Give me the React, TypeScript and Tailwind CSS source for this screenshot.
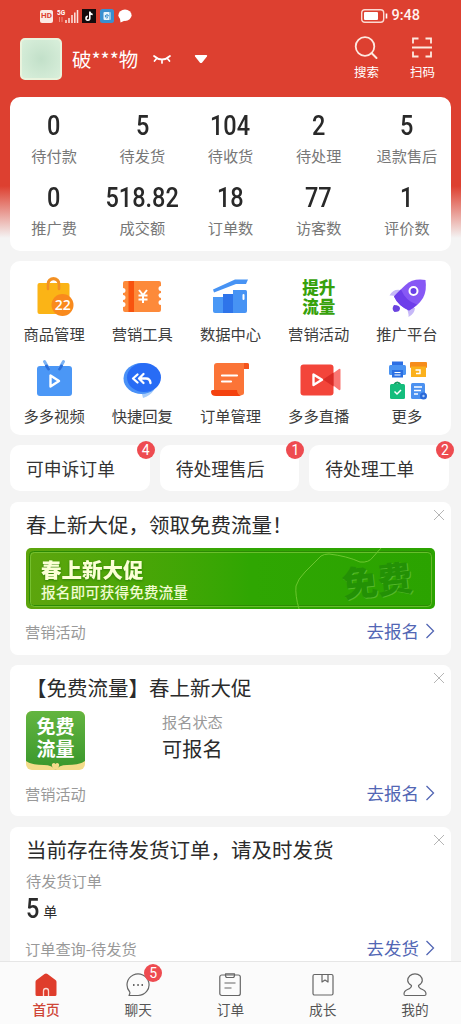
import React from "react";
import clsx from "clsx";

const stats = [
  { value: "0", label: "待付款" },
  { value: "5", label: "待发货" },
  { value: "104", label: "待收货" },
  { value: "2", label: "待处理" },
  { value: "5", label: "退款售后" },
  { value: "0", label: "推广费" },
  { value: "518.82", label: "成交额" },
  { value: "18", label: "订单数" },
  { value: "77", label: "访客数" },
  { value: "1", label: "评价数" },
];

const BagIcon = () => (
  <svg width="44" height="44" viewBox="0 0 44 44">
    <path d="M16 11V9a5.5 5.5 0 0 1 11 0v2" fill="none" stroke="#f59a2c" strokeWidth="3" />
    <rect x="5.5" y="8" width="32" height="31" rx="2" fill="#fbb416" />
    <path d="M16 14V9.500a5.500 5.500 0 0 1 11 0V14" fill="none" stroke="#f28f25" strokeWidth="2.600" strokeLinecap="round" />
    <circle cx="30.500" cy="30" r="11" fill="#f98a1d" />
    <text x="30.800" y="35" textAnchor="middle" fontFamily="Open Sans" fontSize="14" fontWeight="600" fill="#fff">
      22
    </text>
  </svg>
);

const CouponIcon = () => (
  <svg width="44" height="44" viewBox="0 0 44 44">
    <path
      d="M5 6h34q2 0 2 2v3a2.500 2.500 0 0 0 0 5v2a2.500 2.500 0 0 0 0 5v2a2.500 2.500 0 0 0 0 5v5q0 2-2 2H5q-2 0-2-2v-3a2.500 2.500 0 0 0 0-5v-2a2.500 2.500 0 0 0 0-5v-2a2.500 2.500 0 0 0 0-5V8q0-2 2-2z"
      fill="#fd8a3a"
    />
    <path d="M8.500 6h5.500v31H8.500z" fill="#f8530f" />
    <path d="M19 15l4 5 4-5M23 20v8M18.500 20.500h9M18.500 24.500h9" fill="none" stroke="#fff" strokeWidth="2" />
  </svg>
);

const ChartIcon = () => (
  <svg width="44" height="44" viewBox="0 0 44 44">
    <path d="M5 14.500L27 4.500h13l-2 4.500H28L6 17.500z" fill="#4793f4" />
    <path d="M5 22h11v16H7q-2 0-2-2z" fill="#4a98f6" />
    <path d="M15 19h11v19H15z" fill="#2e74ea" />
    <path d="M25 15h12.500q1.500 0 1.500 1.500V36q0 2-2 2H25z" fill="#4793f4" />
    <rect x="34.500" y="19" width="2" height="6" rx="1" fill="#fff" />
  </svg>
);

const RocketIcon = () => (
  <svg width="44" height="44" viewBox="0 0 44 44">
    <path d="M15 15Q8 14 4.500 20.500q5-.500 10 2zM30 33q-.500 6-6.500 9 .500-5-3-10z" fill="#c7b9f8" />
    <path d="M40.500 5Q28 3 20.500 10 13 17 9 21.500q4 9 15 14Q33 31 38 23q4-7 2.500-18z" fill="#8758f5" />
    <path d="M16 14.500Q12 18 9 21.500q4 9 15 14 5-3 8-6-11-3-16-15z" fill="#6e3eea" />
    <circle cx="28.500" cy="16" r="4" fill="#6941e6" stroke="#fff" strokeWidth="2" />
    <path d="M9 30q6 0 6 3.500T9.500 37Q6 34 9 30z" fill="#6a43df" />
  </svg>
);

const VideoIcon = () => (
  <svg width="44" height="44" viewBox="0 0 44 44">
    <rect x="5" y="9" width="35" height="30" rx="3" fill="#4b97f6" />
    <path d="M12.500 4.500l4 7M31.500 4.500l-4 7" stroke="#7bb2f4" strokeWidth="3" strokeLinecap="round" />
    <path d="M14.500 9l2 3M29.500 9l-2 3" stroke="#2b6fdb" strokeWidth="3" strokeLinecap="round" />
    <path d="M18.500 18.500v11l8.500-5.500z" fill="none" stroke="#fff" strokeWidth="2.400" strokeLinejoin="round" />
  </svg>
);

const ReplyIcon = () => (
  <svg width="44" height="44" viewBox="0 0 44 44">
    <path d="M21 33h13q-4 6-11 8z" fill="#a9cdf9" />
    <ellipse cx="21.500" cy="21.500" rx="18" ry="15.500" fill="#4a91f7" />
    <ellipse cx="24" cy="20.500" rx="17" ry="14.500" fill="#286cf5" />
    <path
      d="M17.500 17.500l-4.500 4 4.500 4M23.500 17l-4.500 4.500 4.500 4.500M19.500 21.500H26q4 0 4.500 4.500"
      fill="none"
      stroke="#fff"
      strokeWidth="2.300"
      strokeLinecap="round"
      strokeLinejoin="round"
    />
  </svg>
);

const OrderIcon = () => (
  <svg width="44" height="44" viewBox="0 0 44 44">
    <path d="M9 6h30q2 0 2 2v4h-5v24q0 2-2 2H6V9q0-3 3-3z" fill="#fb7437" />
    <path d="M36 6h3q2 0 2 2v4h-5z" fill="#f4541c" />
    <path d="M4.500 33H29q0 5 5 6H8q-5 0-5-4.500 0-1.500 1.500-1.500z" fill="#f4420f" />
    <path d="M14 18.500h15M14 24.500h9" stroke="#fff" strokeWidth="2.200" strokeLinecap="round" />
  </svg>
);

const LiveIcon = () => (
  <svg width="44" height="44" viewBox="0 0 44 44">
    <path d="M28 22l14-10q1.500-.6 1.500 1v19q0 1.600-1.500 1z" fill="#fa7672" />
    <rect x="3.500" y="7.500" width="33" height="31" rx="3" fill="#f3453a" />
    <path d="M26 22.500l10.500-7v14z" fill="#d92c26" />
    <path d="M16.500 17.500v10.500l8.500-5.200z" fill="none" stroke="#fff" strokeWidth="2.400" strokeLinejoin="round" />
  </svg>
);

const MoreIcon = () => (
  <svg width="44" height="44" viewBox="0 0 44 44">
    <path d="M7 4.500h11V9H7z" fill="#2d6fe4" />
    <rect x="4" y="8" width="17" height="10" rx="1.500" fill="#4a93f2" />
    <path d="M7 13h11v7.500H7z" fill="#2b6fe3" />
    <path d="M9.500 15.500h6M9.500 18h6" stroke="#fff" strokeWidth="1.200" />
    <rect x="25" y="5" width="17" height="6" rx="1" fill="#f68c1c" />
    <path d="M26 9.500h15V20H26z" fill="#fbb11d" />
    <path d="M30.500 13h4.500v3.500h-4" fill="none" stroke="#fff" strokeWidth="1.500" />
    <path d="M9 28q3-5 7 0" fill="none" stroke="#159a61" strokeWidth="2" />
    <rect x="5" y="27" width="15" height="15" rx="1.500" fill="#14bd7c" />
    <path d="M9.500 34.500l2.500 2.500 4-4" fill="none" stroke="#fff" strokeWidth="1.500" />
    <rect x="26" y="26" width="14" height="16" rx="1.500" fill="#4b91f0" />
    <path d="M29 30h8M29 33.500h7M29 37h4" stroke="#fff" strokeWidth="1.300" />
    <circle cx="38.500" cy="39" r="3.500" fill="#2969d9" />
    <circle cx="38.500" cy="39" r="1.200" fill="#a9cbf8" />
  </svg>
);

const BoostIcon = () => (
  <div className="flex h-11 flex-col justify-center text-center text-[16.500px] font-black leading-[19px] text-[#37a10b]">
    <span>提升</span>
    <span>流量</span>
  </div>
);

const tools = [
  { icon: <BagIcon />, label: "商品管理" },
  { icon: <CouponIcon />, label: "营销工具" },
  { icon: <ChartIcon />, label: "数据中心" },
  { icon: <BoostIcon />, label: "营销活动" },
  { icon: <RocketIcon />, label: "推广平台" },
  { icon: <VideoIcon />, label: "多多视频" },
  { icon: <ReplyIcon />, label: "快捷回复" },
  { icon: <OrderIcon />, label: "订单管理" },
  { icon: <LiveIcon />, label: "多多直播" },
  { icon: <MoreIcon />, label: "更多" },
];

const todos = [
  { label: "可申诉订单", count: 4 },
  { label: "待处理售后", count: 1 },
  { label: "待处理工单", count: 2 },
];

const Badge = ({ count, className }: { count: number; className: string }) => (
  <span
    className={clsx(
      "absolute flex h-[18px] w-[18px] items-center justify-center rounded-full bg-[#ee4b50] font-[Roboto] text-[14px] leading-none text-white",
      className
    )}
  >
    {count}
  </span>
);

const StatusBar = () => (
  <div className="flex h-8 shrink-0 items-center justify-between pl-10 pr-[41px]">
    <div className="flex items-center">
      <span className="flex h-[13px] w-[13px] items-center justify-center rounded-[2px] bg-[#fbe9e4] font-[Roboto] text-[8px] font-bold text-[#dd4030]">
        HD
      </span>
      <svg className="ml-1" width="22" height="16" viewBox="0 0 22 16">
        <text x="0" y="6.500" fontFamily="Roboto" fontSize="6.500" fontWeight="700" fill="#fff">
          5G
        </text>
        <path d="M2.500 9v5M5 9v5" stroke="#f08a7c" strokeWidth="1" />
        <path d="M9 12v3M12 10v5M15 7v8M17.800 4.500V15M20.500 2v13" stroke="#fbe3de" strokeWidth="1.500" />
      </svg>
      <svg className="ml-[3px]" width="14" height="14" viewBox="0 0 14 14">
        <rect width="14" height="14" fill="#150b0d" />
        <path d="M7.800 2.500v6.800a1.900 1.900 0 1 1-1.900-1.900M7.800 3q.5 2.300 2.900 2.500" fill="none" stroke="#fff" strokeWidth="1.600" />
      </svg>
      <svg className="ml-1" width="14" height="14" viewBox="0 0 14 14">
        <rect width="14" height="14" rx="2.500" fill="#398fd0" />
        <rect x="3.500" y="3" width="7.500" height="8" rx="1" fill="#e7f3fb" />
        <path d="M5 7h3.500a1.600 1.600 0 1 0-.5 1.500M10 3v8" fill="none" stroke="#398fd0" strokeWidth="1" />
      </svg>
      <svg className="ml-1" width="14" height="14" viewBox="0 0 14 14">
        <ellipse cx="7" cy="6.300" rx="6.600" ry="5.700" fill="#fff" />
        <path d="M2 9.500L2.500 13.500 7 11.500z" fill="#fff" />
      </svg>
    </div>
    <div className="flex items-center">
      <svg width="27" height="14" viewBox="0 0 27 14">
        <rect x=".7" y=".7" width="22" height="12.600" rx="3" fill="none" stroke="#fbd9d2" strokeWidth="1.400" />
        <rect x="3" y="3" width="14" height="8" rx="1" fill="#fff" />
        <path d="M25.500 4.500v5" stroke="#fff" strokeWidth="1.600" />
      </svg>
      <span className="ml-[3px] font-[Roboto] text-[14.500px] font-medium leading-none text-[#fff3ef]">9:48</span>
    </div>
  </div>
);

const Header = () => (
  <div className="flex h-[65px] shrink-0 items-start text-white">
    <div className="ml-5 mt-[6px] h-[42px] w-[42px] rounded-[5px] border-2 border-[#e9f3dd] bg-[radial-gradient(#c2e0c9,#d9efdb)]" />
    <span className="ml-[10px] mt-[15px] text-[19.500px] leading-6">破***物</span>
    <svg className="ml-[15px] mt-[21px]" width="18" height="12" viewBox="0 0 18 12">
      <path d="M1 3q8 7 16 0M4 5L1.500 8M9 6.500V10M14 5l2.500 3" fill="none" stroke="#fff" strokeWidth="1.700" strokeLinecap="round" />
    </svg>
    <svg className="ml-[23px] mt-[22px]" width="14" height="10" viewBox="0 0 14 10">
      <path d="M1.500 1h11q1.200.3.400 1.500L8.200 8.500q-1.200 1-2.400 0L1.100 2.500Q.3 1.300 1.500 1z" fill="#fff" />
    </svg>
    <div className="ml-auto mr-[26px] flex gap-[31px] text-[12.500px] leading-4">
      <div className="flex flex-col items-center">
        <svg className="mt-1" width="24" height="24" viewBox="0 0 24 24">
          <circle cx="11" cy="10.500" r="9.300" fill="none" stroke="#fde9e0" strokeWidth="1.800" />
          <path d="M17.500 17l5 5" stroke="#fde9e0" strokeWidth="2" strokeLinecap="round" />
        </svg>
        <span className="mt-1">搜索</span>
      </div>
      <div className="flex flex-col items-center">
        <svg className="mt-1" width="24" height="24" viewBox="0 0 24 24">
          <path
            d="M3 7.500V2.500h5.500M15.500 2.500H21v5M3 15.500v5h5.500M15.500 20.500H21v-5M2 11.500h20"
            fill="none"
            stroke="#fde9e0"
            strokeWidth="1.800"
          />
        </svg>
        <span className="mt-1">扫码</span>
      </div>
    </div>
  </div>
);

const Card = ({
  title,
  action,
  source,
  children,
  className,
}: {
  title: string;
  action: string;
  source: string;
  children: React.ReactNode;
  className: string;
}) => (
  <div className={clsx("relative mx-[10px] flex shrink-0 flex-col rounded-lg bg-white px-4 pt-[7px]", className)}>
    <svg className="absolute right-[6px] top-[7px]" width="12" height="12" viewBox="0 0 12 12">
      <path d="M1 1l10 10M11 1L1 11" stroke="#b5b5b5" strokeWidth="1" />
    </svg>
    <h2 className="h-[30px] whitespace-nowrap text-[20.500px] leading-[30px] text-[#2b2b2b]">{title}</h2>
    {children}
    <div className="-ml-px flex h-6 items-center justify-between">
      <span className="text-[15.200px] text-[#999]">{source}</span>
      <span className="flex items-center text-[17.500px] text-[#5266b4]">
        {action}
        <svg className="ml-[6px]" width="10" height="16" viewBox="0 0 10 16">
          <path d="M1.500 1l7 7-7 7" fill="none" stroke="#5266b4" strokeWidth="1.300" />
        </svg>
      </span>
    </div>
  </div>
);

const Banner = () => (
  <div className="relative mt-[9px] flex h-[61px] shrink-0 flex-col overflow-hidden rounded-[5px] bg-linear-to-r from-[#5da50d] via-[#2fa602] via-55% to-[#2ba300] pl-[15px] pt-[10px]">
    <svg className="absolute inset-0" width="410" height="61" viewBox="0 0 410 61">
      <rect x="3.500" y="3.500" width="402" height="54" rx="4" fill="none" stroke="#2c8a04" strokeWidth="1" />
      <rect x="4.500" y="4.500" width="401" height="54" rx="4" fill="none" stroke="#80cb3e" strokeWidth="1" opacity=".7" />
      <path d="M273 61q-4-14-3-23 2-7 9-14l16-16q3-2 8-2 18 2 31 8 9 1 13-5l8-9" fill="none" stroke="#6cc62f" strokeWidth="1" />
    </svg>
    <span className="relative text-[20.500px] font-black leading-[22px] text-[#fbffd5] drop-shadow-[0_1px_1px_#2b7d05]">
      春上新大促
    </span>
    <span className="relative mt-[3px] text-[14.700px] font-medium leading-[18px] text-[#f0fbd0]">报名即可获得免费流量</span>
    <span className="absolute right-[23px] top-[13px] -rotate-6 text-[35px] font-black leading-9 text-[#239105] [text-shadow:1px_1px_0_#55b82a]">
      免费
    </span>
  </div>
);

const navItems = [
  {
    label: "首页",
    icon: (
      <>
        <path d="M1.500 9q0-1.500 1-2L10.500.900q1.500-1 3 0l8 6.100q1 .500 1 2v12.500q0 1.500-1.500 1.500H3q-1.500 0-1.500-1.500z" fill="#df3d2c" />
        <path d="M9.500 23v-5q0-2.500 2.500-2.500t2.500 2.500v5" fill="none" stroke="#fbd8d2" strokeWidth="1.300" />
      </>
    ),
  },
  {
    label: "聊天",
    icon: (
      <>
        <path d="M3.500 22.500H12A11 10.800 0 1 0 3.500 18.500Q4.500 20 3 22.500z" />
        <path d="M7 12h1.500M11.300 12h1.500M15.500 12H17" strokeWidth="1.800" />
      </>
    ),
    count: 5,
  },
  {
    label: "订单",
    icon: (
      <>
        <rect x="1.800" y="2" width="20.500" height="20.500" rx="2" />
        <path d="M7.500 2Q7.500 4.500 9 4.500h6q1.500 0 1.500-2.500V.800h-9zM6.500 10h11M6.500 15h7" />
      </>
    ),
  },
  {
    label: "成长",
    icon: (
      <>
        <rect x="2" y="1.500" width="20" height="20.500" rx="1.500" />
        <path d="M11 1.500v7.500l3-2 3 2V1.500" />
      </>
    ),
  },
  {
    label: "我的",
    icon: (
      <path d="M8.500 12.500Q4.700 10 4.700 7.500a7.300 6.700 0 0 1 14.600 0Q19.300 10 15.500 12.500q0 2.500 4 4 3.500 1.500 3.500 4.500 0 1.500-1.500 1.500h-19Q1 22.500 1 21q0-3 3.500-4.500 4-1.500 4-4z" />
    ),
  },
];

const BottomNav = () => (
  <div className="grid h-[63px] shrink-0 grid-cols-5 border-t border-[#e6e6e6] bg-[#fbfbfb]">
    {navItems.map((item, index) => (
      <div key={item.label} className="flex flex-col items-center pt-[11px]">
        <div className="relative h-6 w-6">
          <svg width="24" height="24" viewBox="0 0 24 24" fill="none" stroke={index === 0 ? "none" : "#666"} strokeWidth="1.200" strokeLinejoin="round">
            {item.icon}
          </svg>
          {item.count && <Badge count={item.count} className="-right-[12px] -top-[9px]" />}
        </div>
        <span className={clsx("mt-[3px] text-[13.700px] leading-[18px]", index === 0 ? "font-medium text-[#cf4637]" : "text-[#555]")}>
          {item.label}
        </span>
      </div>
    ))}
  </div>
);

const App = () => {
  return (
    <div className="flex h-[1024px] w-[461px] flex-col overflow-hidden bg-[#f4f4f4] font-['Noto_Sans_CJK_SC',sans-serif]">
      <div className="flex min-h-0 flex-1 flex-col overflow-hidden bg-[linear-gradient(#dd4030_0px,#dd4030_186px,#f4f4f4_238px)]">
        <StatusBar />
        <Header />

        <div className="mx-[10px] grid h-[154px] shrink-0 grid-cols-5 rounded-[10px] bg-white pt-[14px]">
          {stats.map((stat) => (
            <div key={stat.label} className="flex h-[72px] flex-col items-center">
              <span className="scale-x-[.87] font-[Roboto] text-[27px] font-medium leading-[30px] text-[#292929]">{stat.value}</span>
              <span className="mt-1 text-[15.200px] leading-5 text-[#777]">{stat.label}</span>
            </div>
          ))}
        </div>

        <div className="mx-[10px] mt-[10px] grid h-[174px] shrink-0 grid-cols-5 rounded-[10px] bg-white pt-[14px]">
          {tools.map((tool) => (
            <div key={tool.label} className="flex h-[82px] flex-col items-center">
              {tool.icon}
              <span className="mt-[4px] text-[15.300px] leading-5 text-[#3d3d3d]">{tool.label}</span>
            </div>
          ))}
        </div>

        <div className="ml-[10px] mr-3 mt-[10px] grid shrink-0 grid-cols-3 gap-[10px]">
          {todos.map((todo) => (
            <div key={todo.label} className="relative flex h-[46px] items-center rounded-[10px] bg-white pl-4 text-[17.800px] text-[#333]">
              {todo.label}
              <Badge count={todo.count} className="-right-[5px] -top-[4px]" />
            </div>
          ))}
        </div>

        <Card title="春上新大促，领取免费流量！" source="营销活动" action="去报名" className="mt-[11px] h-[153px]">
          <Banner />
          <div className="h-[10px] shrink-0" />
        </Card>

        <Card title="【免费流量】春上新大促" source="营销活动" action="去报名" className="mt-[10px] h-[151px]">
          <div className="mt-[9px] flex h-[59px]">
            <div className="relative flex h-[59px] w-[59px] flex-col items-center overflow-hidden rounded-[6px] bg-[#f3dc8a] text-[19px] font-bold leading-[22px] text-white">
              <svg className="absolute inset-0" width="59" height="59" viewBox="0 0 59 59">
                <defs>
                  <linearGradient id="leaf" x2="0" y2="1">
                    <stop stopColor="#64b540" />
                    <stop offset="1" stopColor="#38962b" />
                  </linearGradient>
                </defs>
                <path d="M0 0h59v50q-5 4-18 4-8 0-11.500 5Q26 54 18 54 5 54 0 50z" fill="url(#leaf)" />
                <path d="M26 53q2-2 3.500 0 1.500-2 3.500 0 1 3-3.500 6-4.500-3-3.500-6z" fill="#f3dc8a" />
              </svg>
              <span className="relative mt-[4px]">免费</span>
              <span className="relative">流量</span>
            </div>
            <div className="ml-[77px] text-[#999]">
              <p className="-mt-px text-[15.200px] leading-[22px]">报名状态</p>
              <p className="mt-[2px] text-[20.200px] leading-[29px] text-[#2b2b2b]">可报名</p>
            </div>
          </div>
          <div className="h-[11px] shrink-0" />
        </Card>

        <Card title="当前存在待发货订单，请及时发货" source="订单查询-待发货" action="去发货" className="mt-[11px] h-[151px]">
          <p className="mt-[5px] text-[15.200px] leading-[22px] text-[#999]">待发货订单</p>
          <p className="mt-[3px] flex h-[30px] items-center text-[#2b2b2b]">
            <span className="origin-left scale-x-[.87] font-[Roboto] text-[27px] font-medium leading-[30px]">5</span>
            <span className="ml-[2px] mt-1 text-[14px]">单</span>
          </p>
          <div className="h-3 shrink-0" />
        </Card>
      </div>
      <BottomNav />
    </div>
  );
};

export default App;
